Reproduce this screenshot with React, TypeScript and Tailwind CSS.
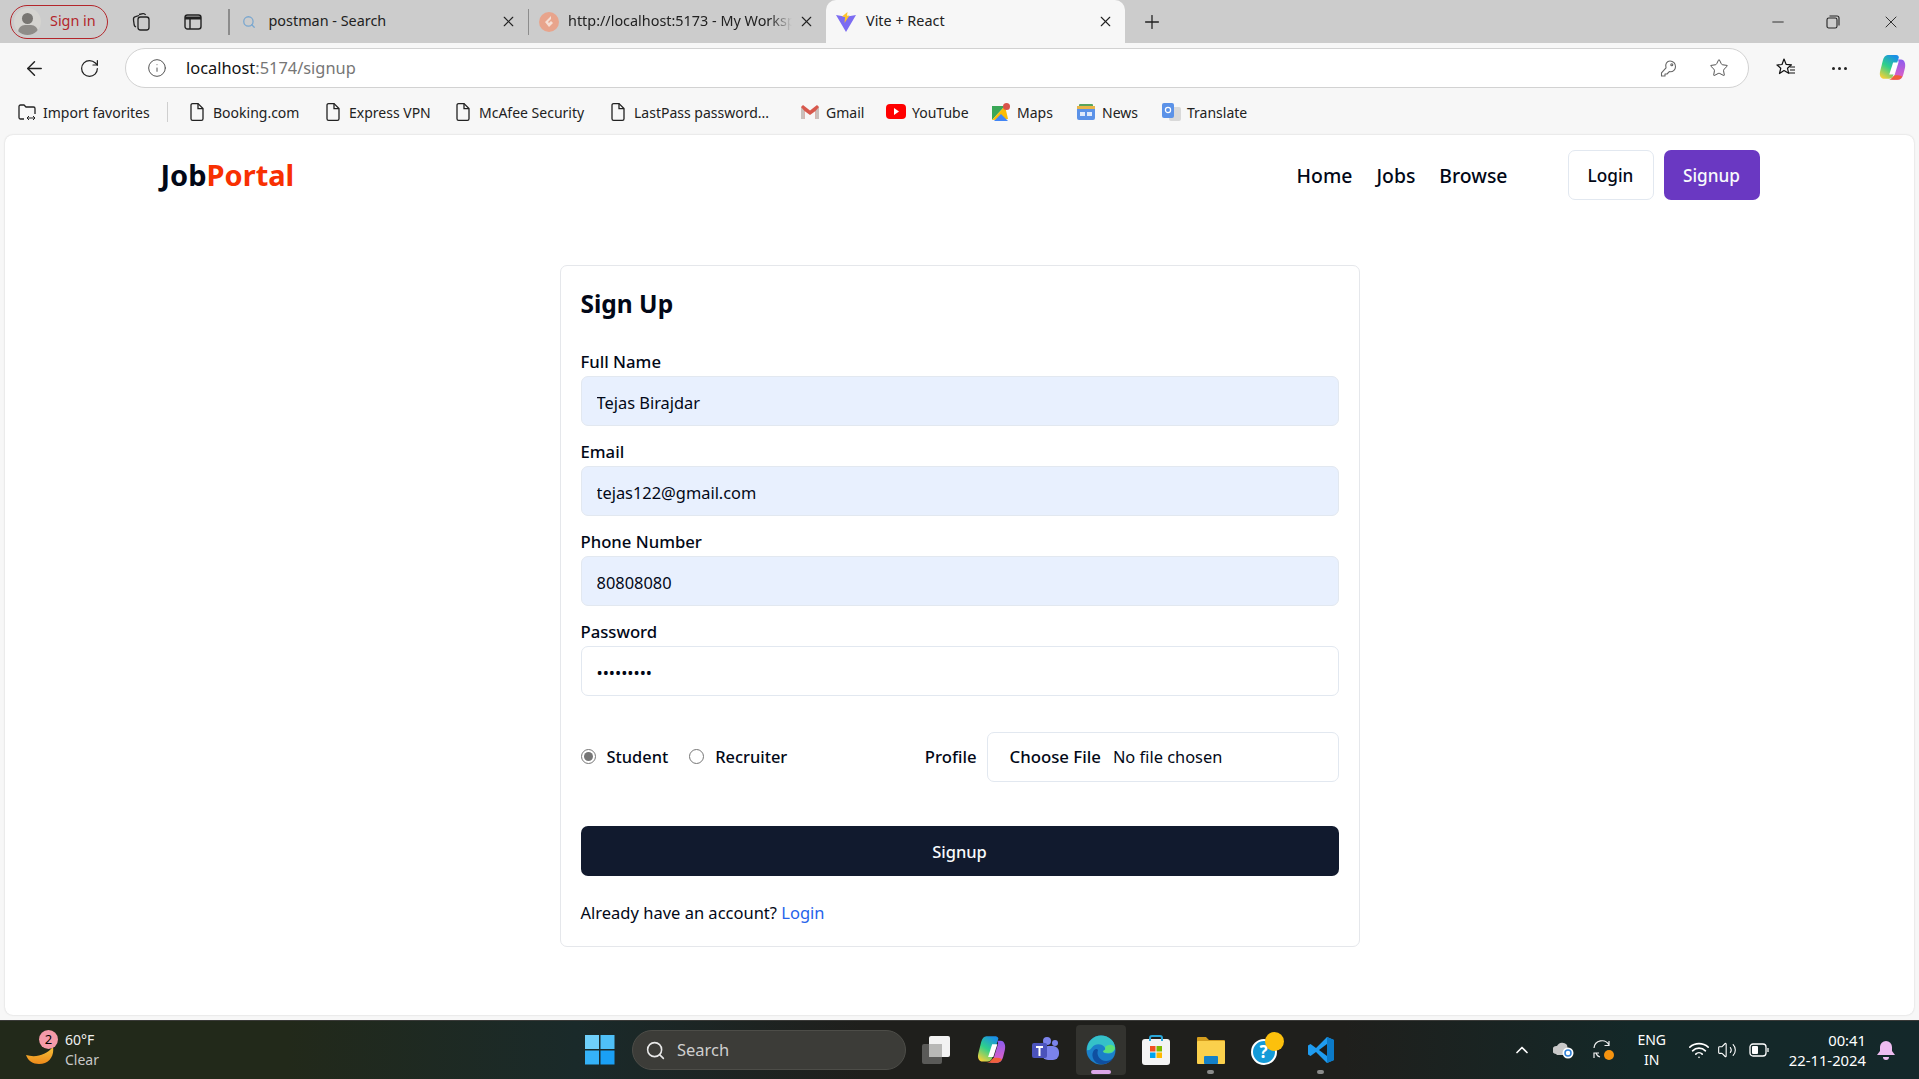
import { ArrowLeft, ChevronUp, Info, Minus, Plus, RotateCw, Search, Star, Volume2, Wifi, X } from "lucide-react";

const sans = "font-['Noto_Sans','Open_Sans',sans-serif]";

function Doc() {
  return (
    <svg width="16" height="20" viewBox="0 0 16 20" fill="none" stroke="#222" strokeWidth="1.3">
      <path d="M2 3.2a1.6 1.6 0 0 1 1.6-1.6H9l5 5v10.2a1.6 1.6 0 0 1-1.6 1.6H3.600A1.6 1.6 0 0 1 2 16.8z" />
      <path d="M9 1.6v5h5" />
    </svg>
  );
}

function Copilot({ size = 26 }: { size?: number }) {
  return (
    <svg width={size} height={size} viewBox="0 0 26 26">
      <defs>
        <linearGradient id="cpa" x1="0.7" y1="0" x2="0.2" y2="1">
          <stop offset="0" stopColor="#1a8fe8" />
          <stop offset="0.5" stopColor="#2fd08a" />
          <stop offset="1" stopColor="#f7d038" />
        </linearGradient>
        <linearGradient id="cpb" x1="0.5" y1="0" x2="0.5" y2="1">
          <stop offset="0" stopColor="#8a5cf0" />
          <stop offset="1" stopColor="#e860c0" />
        </linearGradient>
      </defs>
      <path d="M9 1h8c1.200 0 2 .8 2.400 2L14 20c-.5 2-2 3-4 3H6c-3.500 0-5-3-4-7l2.500-10C5.200 3 7 1 9 1z" fill="url(#cpa)" />
      <path d="M18 5h3.500c3 0 4.500 4 3.500 8l-1.500 6c-.8 3-2.500 5-5 5h-7c2 0 3-1 3.500-3L19 8c.2-1.200 0-3-1-3z" fill="url(#cpb)" />
      <path d="M9 24h9c2 0 3.500-1 4.500-3-2-1-5-1.500-7.500-1l-2 2c-.8.800-2 2-4 2z" fill="#f0603a" />
      <path d="M14 8h4.500L15 19h-4.500z" fill="#fff" />
    </svg>
  );
}

function Tab({ icon, title, width, textClass }: { icon: React.ReactNode; title: string; width: string; textClass: string }) {
  return (
    <div className={`flex h-full items-center ${width}`}>
      <div className="flex w-[39px] shrink-0 justify-center">{icon}</div>
      <span className={`-mt-[2px] overflow-hidden text-[14.4px] whitespace-nowrap text-[#222] ${textClass}`}>{title}</span>
      <X size={17} strokeWidth={1.6} className="mr-[11px] ml-auto shrink-0 text-[#222]" />
    </div>
  );
}

function Bookmark({ icon, label, width }: { icon: React.ReactNode; label: string; width: string }) {
  return (
    <div className={`flex items-center ${width}`}>
      <div className="flex w-[24px] shrink-0 justify-center">{icon}</div>
      <span className="mt-[1px] ml-[4px] text-[14px] whitespace-nowrap text-[#222]">{label}</span>
    </div>
  );
}

function Field({ label, value, type = "text", filled = true }: { label: string; value: string; type?: string; filled?: boolean }) {
  return (
    <div className="mb-[15px]">
      <label className="mb-[3px] block text-[16.7px] leading-[22px] font-medium text-[#020817]">{label}</label>
      <input
        readOnly
        type={type}
        value={value}
        className={`block h-[50px] w-full rounded-[7px] border border-[#e2e8f0] px-[15px] pt-[2px] text-[16.4px] text-[#020817] outline-none ${filled ? "bg-[#e8f0fe]" : "bg-white"}`}
      />
    </div>
  );
}

function Radio({ checked, label, className = "" }: { checked?: boolean; label: string; className?: string }) {
  return (
    <div className={`flex items-center ${className}`}>
      <span className="flex size-[15px] items-center justify-center rounded-full border border-[#767676]">
        {checked && <span className="size-[9px] rounded-full bg-[#767676]" />}
      </span>
      <span className="ml-[11px] text-[16.4px] font-medium text-[#020817]">{label}</span>
    </div>
  );
}

function TaskSlot({ children, active, dot }: { children: React.ReactNode; active?: boolean; dot?: boolean }) {
  return (
    <div className="flex w-[55px] justify-center">
      <div className={`relative flex h-[50px] w-[50px] items-center justify-center rounded ${active ? "bg-[#33332f]" : ""}`}>
        {children}
        {active && <span className="absolute bottom-[1px] h-[4px] w-[20px] rounded-full bg-[#dba6e8]" />}
        {dot && <span className="absolute bottom-[1px] h-[4px] w-[7px] rounded-full bg-[#8a8a8a]" />}
      </div>
    </div>
  );
}

export default function App() {
  return (
    <div className={`flex h-[1079px] w-full flex-col overflow-hidden bg-[#f7f7f7] ${sans}`}>
      {/* tab strip */}
      <div className="flex h-[43px] shrink-0 items-center bg-[#cccccc]">
        <div className="ml-[10px] flex h-[34px] w-[98px] items-center rounded-full border-[1.5px] border-[#b3262b]">
          <span className="relative ml-[3px] flex size-[27px] items-center justify-center overflow-hidden rounded-full bg-[#d5d4d0]">
            <span className="absolute top-[5px] size-[11px] rounded-full bg-[#787672]" />
            <span className="absolute top-[17px] h-[14px] w-[20px] rounded-full bg-[#8e8c88]" />
          </span>
          <span className="-mt-[2px] ml-[9px] text-[14.4px] text-[#b3262b]">Sign in</span>
        </div>
        <svg className="ml-[23px]" width="20" height="20" viewBox="0 0 20 20" fill="none" stroke="#222" strokeWidth="1.3">
          <rect x="7" y="5" width="11" height="13" rx="2.5" />
          <path d="M5 15c-1-.5-1.500-1-1.800-2L2.500 8c-.2-1.500.5-3 2-3.300L8 3.500M8 2.500l4-.8c1-.1 2 .2 2.600 1.300" />
        </svg>
        <svg className="ml-[33px]" width="18" height="18" viewBox="0 0 18 18" fill="none" stroke="#222" strokeWidth="1.4">
          <rect x="1" y="2" width="16" height="14" rx="2.5" />
          <path d="M1 5h16" strokeWidth="3" />
          <path d="M6 5v11" />
        </svg>
        <div className="ml-[26px] h-[26px] w-[1.5px] bg-[#8c8c8c]" />
        <Tab
          width="w-[298px]"
          textClass=""
          title="postman - Search"
          icon={<Search size={14} strokeWidth={2.2} className="text-[#7aa7cf]" />}
        />
        <div className="h-[26px] w-[1.5px] bg-[#8c8c8c]" />
        <Tab
          width="w-[297px]"
          textClass="w-[224px] [mask-image:linear-gradient(90deg,#000_90%,transparent)]"
          title="http://localhost:5173 - My Workspace"
          icon={
            <svg width="20" height="20" viewBox="0 0 20 20">
              <circle cx="10" cy="10" r="10" fill="#e8a48c" />
              <path d="M12 4 6 10l4 5 4-4-2-2-2 2-1-1 3-3z" fill="#f6dfd5" />
            </svg>
          }
        />
        <div className="flex h-full w-[299px] items-center rounded-t-[10px] bg-[#f7f7f7]">
          <div className="flex w-[40px] shrink-0 justify-center">
            <svg width="20" height="20" viewBox="0 0 20 20">
              <path d="M0 3l10 1.800L20 3 10 20z" fill="#7c6cf2" />
              <path d="M11.500 0 6 4.500l3 .5-.5 6 5-7.500-2.500.2z" fill="#fdc42b" />
            </svg>
          </div>
          <span className="-mt-[2px] text-[14.4px] text-[#222]">Vite + React</span>
          <X size={17} strokeWidth={1.6} className="mr-[11px] ml-auto text-[#222]" />
        </div>
        <Plus size={22} strokeWidth={1.4} className="ml-[16px] text-[#222]" />
        <div className="ml-auto flex items-center">
          <Minus size={18} strokeWidth={1.2} className="text-[#222]" />
          <svg className="ml-[39px]" width="14" height="14" viewBox="0 0 14 14" fill="none" stroke="#222" strokeWidth="1.1">
            <rect x="1" y="3" width="10" height="10" rx="1.8" />
            <path d="M3.500 1H11a2 2 0 0 1 2 2v7.500" />
          </svg>
          <X size={20} strokeWidth={1.1} className="mr-[18px] ml-[41px] text-[#222]" />
        </div>
      </div>

      {/* address row */}
      <div className="flex h-[45px] shrink-0 items-center bg-[#f7f7f7] pt-[5px]">
        <ArrowLeft size={23} strokeWidth={1.5} className="ml-[23px] text-[#222]" />
        <RotateCw size={21} strokeWidth={1.4} className="ml-[33px] text-[#222]" />
        <div className="ml-[25px] flex h-[40px] w-[1624px] items-center rounded-full border-[1.5px] border-[#d2d2d2] bg-white">
          <Info size={20} strokeWidth={1.2} className="ml-[21px] text-[#555]" />
          <span className="ml-[19px] text-[16.4px] text-[#111]">
            localhost<span className="text-[#767676]">:5174/signup</span>
          </span>
          <svg className="ml-auto" width="18" height="18" viewBox="0 0 18 18" fill="none" stroke="#666" strokeWidth="1.1">
            <path d="M10 2a5.500 5.500 0 0 1 5.500 5.800c0 3-2.500 5-5 5l-1.200-.2L7 15H5v2H1.500v-3.200L6 8.800C4.800 5 7 2 10 2z" strokeLinejoin="round" />
            <circle cx="11.800" cy="5.800" r="1" />
          </svg>
          <Star size={20} strokeWidth={1.2} className="mr-[19px] ml-[31px] text-[#555]" />
        </div>
        <svg className="ml-[26px]" width="22" height="22" viewBox="0 0 22 22" fill="none" stroke="#111" strokeWidth="1.2">
          <path d="M9 2l2.200 5.400 5.300.4-4 3.500 1.200 5-4.700-2.800-4.500 3 1.300-5.300L2 8l5-.5z" strokeLinejoin="round" />
          <path d="M15 10h5M15 13h5M14 16h6" />
        </svg>
        <div className="ml-[35px] flex gap-[3px]">
          <span className="size-[3px] rounded-full bg-[#222]" />
          <span className="size-[3px] rounded-full bg-[#222]" />
          <span className="size-[3px] rounded-full bg-[#222]" />
        </div>
        <div className="ml-[31px]">
          <Copilot size={28} />
        </div>
      </div>

      {/* favorites bar */}
      <div className="flex h-[47px] shrink-0 items-center">
        <Bookmark
          width="w-[152px] ml-[15px]"
          label="Import favorites"
          icon={
            <svg width="20" height="20" viewBox="0 0 20 20" fill="none" stroke="#222" strokeWidth="1.3">
              <path d="M7 17H3.500A1.500 1.500 0 0 1 2 15.500v-11A1.500 1.500 0 0 1 3.500 3H7l2 2h7.500A1.500 1.500 0 0 1 18 6.500V12" />
              <path d="M10 16h8M12 14l-2 2 2 2M16 14l2 2-2 2" strokeWidth="1" />
            </svg>
          }
        />
        <div className="h-[20px] w-px bg-[#cfcfcf]" />
        <Bookmark width="w-[136px] ml-[17px]" label="Booking.com" icon={<Doc />} />
        <Bookmark width="w-[130px]" label="Express VPN" icon={<Doc />} />
        <Bookmark width="w-[155px]" label="McAfee Security" icon={<Doc />} />
        <Bookmark width="w-[192px]" label="LastPass password..." icon={<Doc />} />
        <Bookmark
          width="w-[86px]"
          label="Gmail"
          icon={
            <svg width="20" height="16" viewBox="0 0 20 16">
              <path d="M1 3v12h3.500V7L10 11l5.500-4v8H19V3l-2-2-7 5.500L3 1z" fill="#d8584c" />
              <path d="M1 3l3.500 4v8H1zM19 3l-3.500 4v8H19z" fill="#c9c0bc" />
            </svg>
          }
        />
        <Bookmark
          width="w-[105px]"
          label="YouTube"
          icon={
            <svg width="20" height="15" viewBox="0 0 20 15">
              <rect width="20" height="15" rx="4" fill="#f00" />
              <path d="M8 4l5 3.500L8 11z" fill="#fff" />
            </svg>
          }
        />
        <Bookmark
          width="w-[85px]"
          label="Maps"
          icon={
            <svg width="20" height="20" viewBox="0 0 20 20">
              <path d="M1 4h13L1 18z" fill="#3aa757" />
              <path d="M1 18 14 4l3 13z" fill="#fbbc04" />
              <path d="M3 19l7-7 7 7z" fill="#4285f4" />
              <circle cx="15.5" cy="4.5" r="3.5" fill="#d8534a" />
            </svg>
          }
        />
        <Bookmark
          width="w-[85px]"
          label="News"
          icon={
            <svg width="18" height="18" viewBox="0 0 18 18">
              <rect x="2" y="1" width="14" height="6" rx="1" fill="#58a45c" />
              <rect x="0" y="4" width="18" height="13" rx="2" fill="#5b92e8" />
              <rect x="0" y="3" width="18" height="3" fill="#e8b54a" />
              <rect x="3" y="9" width="5" height="4" fill="#dfe9fb" />
              <rect x="10" y="9" width="5" height="4" fill="#dfe9fb" />
            </svg>
          }
        />
        <Bookmark
          width="w-[110px]"
          label="Translate"
          icon={
            <svg width="20" height="20" viewBox="0 0 20 20">
              <rect x="8" y="5" width="12" height="14" rx="2" fill="#d9d9d9" />
              <rect x="1" y="1" width="12" height="15" rx="2" fill="#5b92e8" />
              <circle cx="7" cy="8" r="2.6" fill="none" stroke="#fff" strokeWidth="1.2" />
            </svg>
          }
        />
      </div>

      {/* page */}
      <main className="mx-[5px] h-[880px] shrink-0 rounded-lg bg-white shadow-[0_0_2px_rgba(0,0,0,0.18)]">
        <nav className="mx-auto flex h-[80px] w-[1600px] items-center">
          <h1 className="ml-[1px] text-[29px] font-bold text-[#020817]">
            Job<span className="text-[#f83002]">Portal</span>
          </h1>
          <ul className="ml-auto flex gap-[24px] pt-[2px] text-[19.4px] font-medium text-[#020817]">
            <li>Home</li>
            <li>Jobs</li>
            <li>Browse</li>
          </ul>
          <button className="ml-[60px] h-[50px] w-[86px] rounded-[7px] border border-[#e2e8f0] bg-white pt-[2px] text-[17.2px] font-medium text-[#020817]">
            Login
          </button>
          <button className="ml-[10px] h-[50px] w-[96px] rounded-[7px] bg-[#6a38c2] pt-[2px] text-[17.2px] font-medium text-[#f8fafc]">
            Signup
          </button>
        </nav>

        <form className="mx-auto mt-[50px] w-[800px] rounded-[7px] border border-[#e5e7eb] p-5">
          <h2 className="mb-[30px] pt-[1px] text-[24.5px] leading-[34px] font-bold text-[#020817]">Sign Up</h2>
          <Field label="Full Name" value="Tejas Birajdar" />
          <Field label="Email" value="tejas122@gmail.com" />
          <Field label="Phone Number" value="80808080" />
          <Field label="Password" value="tejas1234" type="password" filled={false} />

          <div className="mt-[36px] flex h-[50px] items-center">
            <Radio checked label="Student" />
            <Radio label="Recruiter" className="ml-[21px]" />
            <span className="ml-auto text-[16.7px] font-medium text-[#020817]">Profile</span>
            <div className="ml-[10px] flex h-[50px] w-[352px] items-center rounded-[7px] border border-[#e2e8f0] px-[22px] text-[16.4px] text-[#020817]">
              <span className="text-[16.8px] font-medium">Choose File</span>
              <span className="ml-[12px]">No file chosen</span>
            </div>
          </div>

          <button className="mt-[44px] h-[50px] w-full rounded-[7px] bg-[#111a2e] pt-[2px] text-[16.5px] font-medium text-[#f8fafc]">
            Signup
          </button>
          <p className="mt-[24px] mb-[1px] text-[16.5px] leading-[25px] text-[#020817]">
            Already have an account? <span className="text-[#2563eb]">Login</span>
          </p>
        </form>
      </main>

      {/* taskbar */}
      <footer className="mt-[5px] flex h-[59px] shrink-0 items-center border-t border-[#3a3a38] bg-[linear-gradient(90deg,#22291a_0%,#22291a_15%,#1a2a2a_30%,#1f1f1c_45%,#1f1f1c_70%,#142828_85%,#14282a_100%)]">
        <div className="relative ml-[26px] h-[40px] w-[40px]">
          <svg className="absolute top-[17px] left-0" width="28" height="17" viewBox="0 0 28 17">
            <defs>
              <linearGradient id="moon" x1="0" y1="0" x2="0" y2="1">
                <stop offset="0" stopColor="#f5c23a" />
                <stop offset="1" stopColor="#ee8a1a" />
              </linearGradient>
            </defs>
            <path d="M27 0c1.500 9-4 17-14 17C7 17 2 14 0 8c10 3 20 0 27-8z" fill="url(#moon)" />
          </svg>
          <span className="absolute top-0 left-[13px] flex size-[19px] items-center justify-center rounded-full bg-[#f59aa8] text-[13px] text-black">2</span>
        </div>
        <div className="ml-[-1px] text-[14px] leading-[20px] text-[#f0f0f0]">
          <div>60°F</div>
          <div className="text-[#c8c8c8]">Clear</div>
        </div>

        <svg className="ml-[486px]" width="30" height="30" viewBox="0 0 30 30">
          <rect width="14" height="14" fill="#6fd0fa" />
          <rect x="15.5" width="14" height="14" fill="#4fc0f7" />
          <rect y="15.5" width="14" height="14" fill="#35b2f7" />
          <rect x="15.5" y="15.5" width="14" height="14" fill="#1aa0f5" />
        </svg>
        <div className="ml-[17px] flex h-[40px] w-[274px] items-center rounded-full border border-[#4d4d48] bg-[#3c3c38]">
          <Search size={21} strokeWidth={1.8} className="ml-[12px] text-[#e8e8e8]" />
          <span className="ml-[11px] text-[16.5px] text-[#cfcfcf]">Search</span>
        </div>

        <div className="ml-[2px] flex items-center">
          <TaskSlot>
            <svg width="30" height="30" viewBox="0 0 30 30">
              <rect x="1" y="9" width="20" height="20" rx="2" fill="#5a5a58" />
              <rect x="8" y="1" width="21" height="21" rx="2" fill="#f2f2f2" />
              <rect x="8" y="9" width="13" height="13" fill="#b8b8b6" />
            </svg>
          </TaskSlot>
          <TaskSlot>
            <Copilot size={30} />
          </TaskSlot>
          <TaskSlot>
            <svg width="28" height="28" viewBox="0 0 28 28">
              <circle cx="23" cy="7" r="3" fill="#7b83eb" />
              <circle cx="15" cy="5" r="4" fill="#7b83eb" />
              <rect x="10" y="10" width="17" height="14" rx="6" fill="#7b83eb" />
              <rect x="0" y="7" width="15" height="15" rx="2" fill="#4b53bc" />
              <path d="M4 10h7v2H8.500v8h-2v-8H4z" fill="#fff" />
            </svg>
          </TaskSlot>
          <TaskSlot active>
            <svg width="30" height="30" viewBox="0 0 30 30">
              <circle cx="15" cy="15" r="14.5" fill="#1b7fc9" />
              <path d="M1 15C1 6 8 .5 15 .5c8 0 14 6 14 12 0 5-4 6-7 6-3 0-5-1-5-2 2-1 3-3 1-5-3-3-9-3-12 1-2 3-4 3-5 2.500z" fill="#35c1c8" />
              <path d="M29 13c0 2-3 5-7 5-3 0-5-1-5-2 2-1 3-2 2-4 4-3 8-3 10 1z" fill="#5ae07a" />
              <path d="M12 15c-2 5 2 11 8 11 3 0 5-1 7-3-3 6-9 6-12 6-7 0-10-8-8-12 1-3 4-4 5-2z" fill="#0f4fa0" />
            </svg>
          </TaskSlot>
          <TaskSlot>
            <svg width="28" height="30" viewBox="0 0 28 30">
              <rect y="4" width="28" height="26" rx="3" fill="#f4f4f4" />
              <path d="M8 6V3a2 2 0 0 1 2-2h8a2 2 0 0 1 2 2v3" fill="none" stroke="#2aa6d8" strokeWidth="2" />
              <rect x="8" y="11" width="5.5" height="5.5" fill="#f25022" />
              <rect x="14.5" y="11" width="5.5" height="5.5" fill="#7fba00" />
              <rect x="8" y="17.5" width="5.5" height="5.5" fill="#00a4ef" />
              <rect x="14.5" y="17.5" width="5.5" height="5.5" fill="#ffb900" />
            </svg>
          </TaskSlot>
          <TaskSlot dot>
            <svg width="30" height="28" viewBox="0 0 30 28">
              <path d="M1 2a1 1 0 0 1 1-1h8l3 3h15a1 1 0 0 1 1 1v4H1z" fill="#d59e1e" />
              <rect x="1" y="5" width="28" height="23" rx="1" fill="#fbd04c" />
              <rect x="8" y="20" width="14" height="8" rx="1" fill="#1480c8" />
            </svg>
          </TaskSlot>
          <TaskSlot>
            <div className="relative h-[30px] w-[30px]">
              <span className="absolute top-[4px] left-0 flex size-[26px] items-center justify-center rounded-full border-2 border-white bg-[#149ad8] text-[17px] font-bold text-white">?</span>
              <span className="absolute top-[-3px] left-[14px] size-[19px] rounded-full bg-[#fcc00c]" />
            </div>
          </TaskSlot>
          <TaskSlot dot>
            <svg width="28" height="28" viewBox="0 0 28 28">
              <path d="M20 1 9 12 3.500 8 1 9.500V18.500L3.500 20 9 16l11 11 7-3V4z" fill="#1f9cf0" />
              <path d="M20 8 12 14l8 6z" fill="#1c1c1a" />
              <path d="M20 1l7 3v20l-7 3z" fill="#0b7ac8" />
            </svg>
          </TaskSlot>
        </div>

        <div className="ml-auto flex items-center text-white">
          <ChevronUp size={20} strokeWidth={2} />
          <svg className="ml-[21px]" width="21" height="18" viewBox="0 0 21 18">
            <path d="M3 13a4 4 0 0 1 1-8 6 6 0 0 1 10-1l1 5-4 5H4z" fill="#c8c8c8" />
            <circle cx="15" cy="12" r="5.5" fill="#fff" />
            <circle cx="15" cy="12" r="3" fill="none" stroke="#2f80d8" strokeWidth="1.5" />
          </svg>
          <svg className="ml-[19px]" width="22" height="22" viewBox="0 0 22 22" fill="none" stroke="#eee" strokeWidth="1.2">
            <path d="M1 9a8 8 0 0 1 15-3M16 2v4.500h-4.500M3 14c.6 1.800 2 3.500 4 4M1 19v-5h5" />
            <circle cx="16" cy="16" r="5" fill="#f5930f" stroke="none" />
          </svg>
          <div className="ml-[15px] w-[44px] text-center text-[14px] leading-[20px]">
            <div>ENG</div>
            <div>IN</div>
          </div>
          <Wifi size={22} strokeWidth={1.8} className="ml-[14px]" />
          <Volume2 size={20} strokeWidth={1.3} className="ml-[7px]" />
          <svg className="ml-[12px]" width="20" height="14" viewBox="0 0 20 14" fill="none" stroke="#fff" strokeWidth="1.3">
            <rect x="1" y="1" width="16" height="12" rx="3" />
            <rect x="3" y="3" width="6" height="8" rx="1" fill="#fff" stroke="none" />
            <path d="M19 5v4" />
          </svg>
          <div className="ml-[20px] text-right text-[14.8px] leading-[20px]">
            <div>00:41</div>
            <div>22-11-2024</div>
          </div>
          <svg className="mr-[24px] ml-[11px]" width="18" height="20" viewBox="0 0 18 20">
            <path d="M9 1a6 6 0 0 1 6 6v4l3 4H0l3-4V7a6 6 0 0 1 6-6z" fill="#eebcf0" />
            <path d="M6 17h6a3 3 0 0 1-6 0z" fill="#eebcf0" />
          </svg>
        </div>
      </footer>
    </div>
  );
}
